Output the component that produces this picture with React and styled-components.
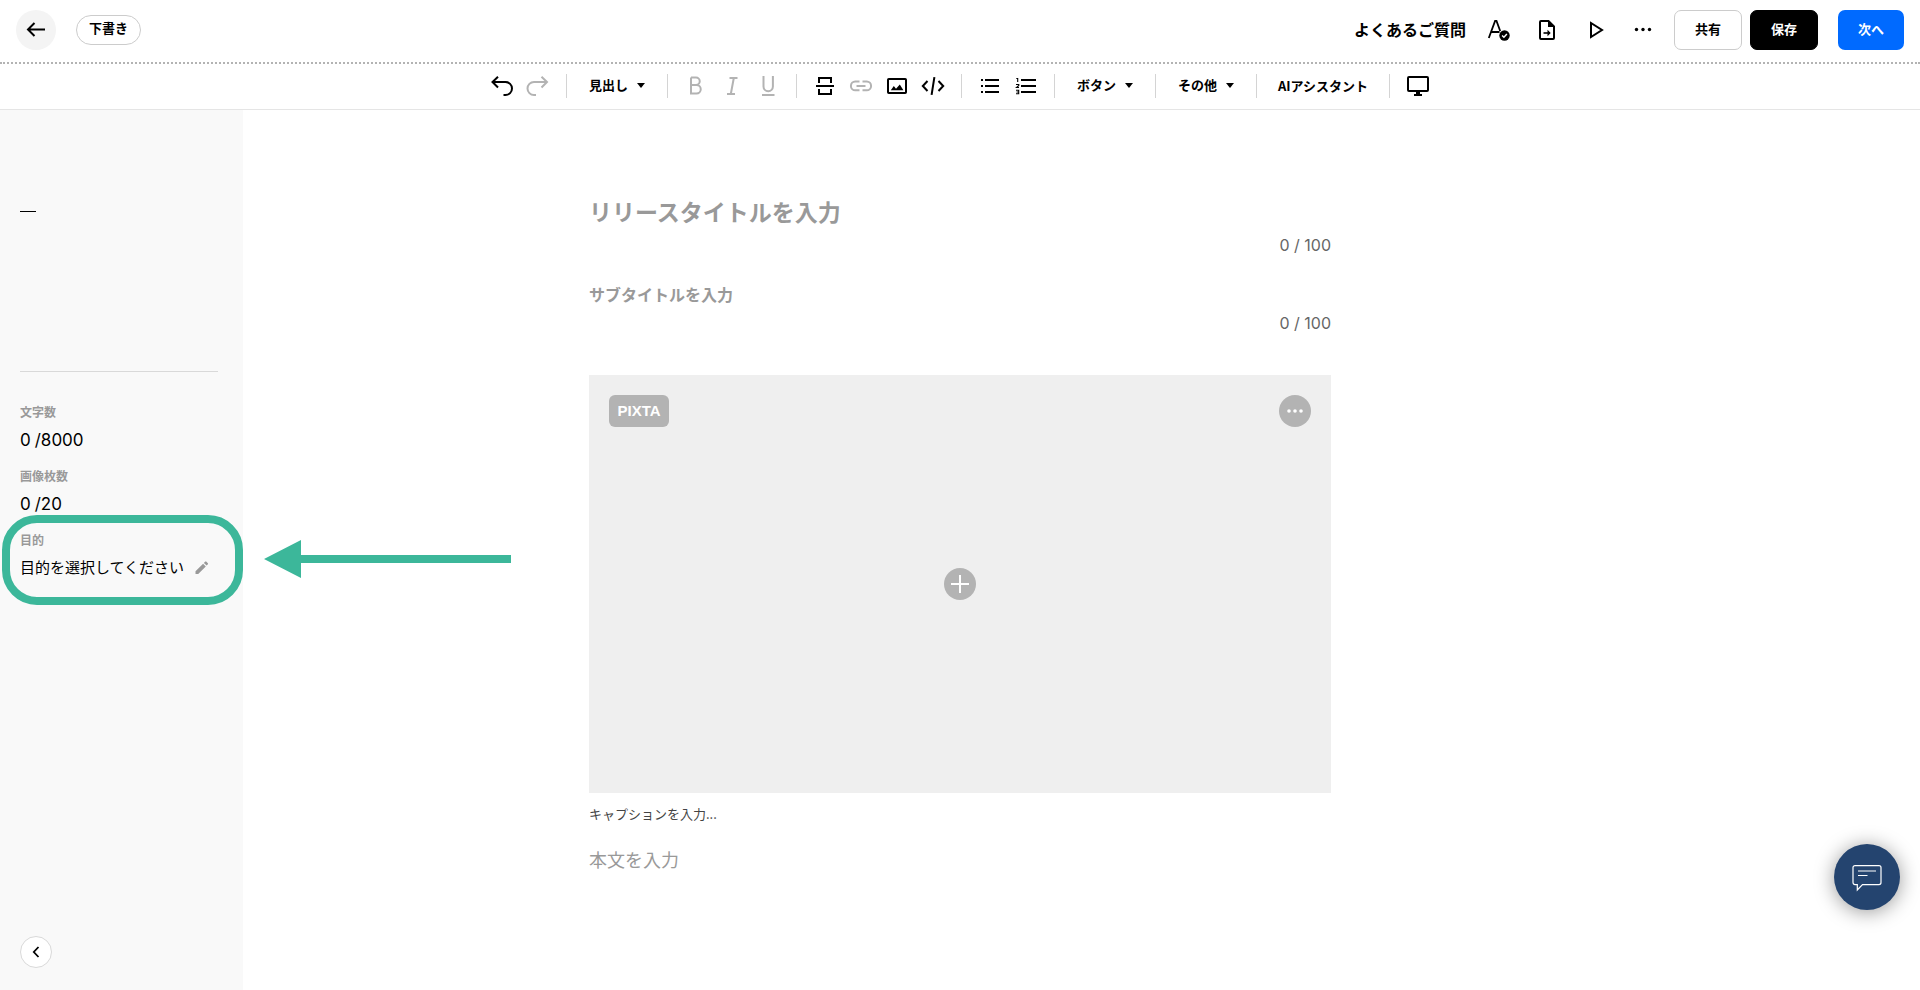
import React from "react";
import styled, { createGlobalStyle, css } from "styled-components";

const GlobalStyle = createGlobalStyle`
  *, *::before, *::after { box-sizing: border-box; }
  body {
    margin: 0;
    background: #fff;
    color: #000;
    font-family: "Noto Sans CJK JP", sans-serif;
    font-size: 16px;
  }
  button, input, textarea { font: inherit; color: inherit; }
  button { padding: 0; border: 0; background: none; cursor: pointer; }
  svg { display: block; }
`;

const Page = styled.div`
  display: flex;
  flex-direction: column;
  min-height: 100vh;
`;

/* ---------- header ---------- */

const Header = styled.header`
  display: flex;
  align-items: center;
  justify-content: space-between;
  padding: 10px 16px 12px;
  border-bottom: 2px dotted #b3b3b3;
`;

const HeaderGroup = styled.div`
  display: flex;
  align-items: center;
  gap: 20px;
`;

const BackButton = styled.button`
  display: grid;
  place-items: center;
  width: 40px;
  height: 40px;
  border-radius: 50%;
  background: #f4f4f4;
`;

const StatusPill = styled.span`
  padding: 0 12px 4px;
  border: 1px solid #ccc;
  border-radius: 15px;
  font-size: 13px;
  font-weight: 700;
  line-height: 24px;
`;

const FaqLink = styled.a`
  padding-bottom: 2px;
  color: #000;
  font-weight: 700;
  line-height: 24px;
  text-decoration: none;
`;

const IconRow = styled.div`
  display: flex;
  gap: 24px;
`;

const IconButton = styled.button`
  width: 24px;
  height: 24px;
  color: #000;
  &:disabled { color: #b3b3b3; cursor: default; }
`;

const ButtonRow = styled.div`
  display: flex;
  gap: 8px;
`;

const actionTones = {
  outline: css`
    border: 1px solid #ccc;
    background: #fff;
    color: #000;
  `,
  dark: css`
    border: 1px solid #000;
    background: #000;
    color: #fff;
  `,
  primary: css`
    background: #006aff;
    color: #fff;
  `,
};

const ActionButton = styled.button`
  height: 40px;
  padding: 0 20px 4px;
  border-radius: 7px;
  font-size: 13px;
  font-weight: 700;
  ${({ $tone }) => actionTones[$tone]}
`;

/* ---------- toolbar ---------- */

const Toolbar = styled.div`
  display: flex;
  justify-content: center;
  padding: 10px 0 11px;
  border-bottom: 1px solid #e5e5e5;
`;

const ToolGroup = styled.div`
  display: flex;
  align-items: center;
  gap: 12px;
  height: 24px;
  padding: 0 16px;
  & + & { border-left: 1px solid #d4d4d4; }
`;

const MenuButton = styled.button`
  display: flex;
  align-items: center;
  gap: 9px;
  height: 24px;
  padding: 0 6px 2px;
  font-size: 13px;
  font-weight: 700;
  line-height: 22px;
  white-space: nowrap;
`;

const AssistantButton = styled(MenuButton)`
  padding: 0 5px;
`;

const Caret = styled.span`
  border: 4px solid transparent;
  border-top: 5px solid #000;
  border-bottom: 0;
`;

/* ---------- workspace ---------- */

const Workspace = styled.div`
  flex: 1;
  display: grid;
  grid-template-columns: 243px minmax(0, 1fr) 243px;
`;

const Sidebar = styled.aside`
  display: flex;
  flex-direction: column;
  padding: 101px 25px 22px 20px;
  background: #f9f9f9;
`;

const OutlineMark = styled.span`
  width: 16px;
  height: 1px;
  background: #000;
`;

const Divider = styled.hr`
  width: 100%;
  height: 1px;
  margin: 159px 0 32px;
  border: 0;
  background: #d9d9d9;
`;

const Stats = styled.dl`
  display: flex;
  flex-direction: column;
  gap: 18px;
  margin: 0;
`;

const Stat = styled.div`
  position: relative;
  display: flex;
  flex-direction: column;
  gap: 10px;
  height: 46px;
`;

const StatLabel = styled.dt`
  color: #999;
  font-size: 12px;
  font-weight: 700;
  line-height: 16px;
`;

const StatValue = styled.dd`
  display: flex;
  align-items: center;
  gap: 4px;
  margin: 0;
  font-family: Inter, "Noto Sans CJK JP", sans-serif;
  font-size: 17px;
  line-height: 20px;
  white-space: nowrap;
`;

const PurposeButton = styled.button`
  display: flex;
  align-items: center;
  gap: 10px;
  padding-bottom: 2px;
  font-family: "Noto Sans CJK JP", sans-serif;
  font-size: 15px;
  line-height: 18px;
`;

const Highlight = styled.div`
  position: absolute;
  inset: -17px -25px -27px -18px;
  border: 8px solid #3cb79a;
  border-radius: 35px;
  pointer-events: none;
`;

const HighlightArrow = styled.svg`
  position: absolute;
  top: 8px;
  left: 244px;
  pointer-events: none;
`;

const CollapseButton = styled.button`
  display: grid;
  place-items: center;
  width: 32px;
  height: 32px;
  margin-top: auto;
  border: 1px solid #d9d9d9;
  border-radius: 50%;
  background: #fff;
`;

/* ---------- editor ---------- */

const Editor = styled.main`
  display: flex;
  flex-direction: column;
  width: 100%;
  max-width: 742px;
  margin: 0 auto;
  padding-top: 83px;
`;

const Field = styled.input`
  display: block;
  width: 100%;
  padding: 0;
  border: 0;
  outline: 0;
  background: none;
  &::placeholder { color: #999; opacity: 1; }
`;

const TitleField = styled(Field)`
  height: 36px;
  font-size: 23px;
  font-weight: 700;
`;

const SubtitleField = styled(Field)`
  height: 26px;
  margin-top: 26px;
  font-weight: 700;
`;

const Counter = styled.output`
  align-self: flex-end;
  margin-top: 6px;
  color: #666;
  font-family: Inter, sans-serif;
  font-size: 16px;
  line-height: 20px;
`;

const ImageSlot = styled.section`
  display: grid;
  grid-template-rows: 1fr auto 1fr;
  aspect-ratio: 742 / 418;
  margin-top: 42px;
  padding: 20px;
  background: #efefef;
`;

const SlotBar = styled.div`
  display: flex;
  justify-content: space-between;
  align-items: flex-start;
`;

const PixtaButton = styled.button`
  width: 60px;
  height: 32px;
  padding-bottom: 1px;
  border-radius: 6px;
  background: #b3b3b3;
  color: #fff;
  font-family: "Liberation Sans", sans-serif;
  font-size: 15px;
  font-weight: 700;
`;

const RoundButton = styled.button`
  display: grid;
  place-items: center;
  justify-self: center;
  width: 32px;
  height: 32px;
  border-radius: 50%;
  background: #b3b3b3;
  color: #fff;
`;

const CaptionField = styled(Field)`
  height: 20px;
  margin-top: 10px;
  font-size: 13px;
  &::placeholder { color: #444; }
`;

const BodyField = styled(Field)`
  height: 80px;
  margin-top: 22px;
  font-size: 18px;
  line-height: 28px;
  resize: none;
`;

const ChatButton = styled.button`
  position: fixed;
  right: 20px;
  bottom: 80px;
  display: grid;
  place-items: center;
  width: 66px;
  height: 66px;
  border-radius: 50%;
  background: #24446f;
  color: #fff;
  box-shadow: 0 2px 20px rgba(0, 0, 0, 0.4);
`;

/* ---------- icons ---------- */

const Icon = ({ size = 24, stroke = 2, children }) => (
  <svg
    width={size}
    height={size}
    viewBox={`0 0 ${size} ${size}`}
    fill="none"
    stroke="currentColor"
    strokeWidth={stroke}
    aria-hidden="true"
  >
    {children}
  </svg>
);

const solid = { fill: "currentColor", stroke: "none" };

const icons = {
  back: (
    <Icon>
      <path d="M21 11.500H4M10.500 5L4 11.500l6.500 6.500" />
    </Icon>
  ),
  proofread: (
    <Icon stroke={1.8}>
      <path d="M2.800 20L9.100 2.900h1.400L14.200 13M5 14h8.500" />
      <circle cx="18.500" cy="17.500" r="5.200" {...solid} />
      <path d="M16.100 17.600l1.800 1.700 3-3.300" stroke="#fff" strokeWidth="1.400" />
    </Icon>
  ),
  exportDoc: (
    <Icon>
      <path d="M14.500 3H7a1 1 0 0 0-1 1v16a1 1 0 0 0 1 1h12a1 1 0 0 0 1-1V8.500z" />
      <path d="M14 3v6h6z" {...solid} />
      <path d="M9.500 15h6" strokeWidth="1.600" />
      <path d="M13.500 11.800l3.200 3.200-3.200 3.200z" {...solid} />
    </Icon>
  ),
  play: (
    <Icon>
      <path d="M9 5v14L20 12z" />
    </Icon>
  ),
  more: (
    <Icon>
      <g {...solid}>
        <circle cx="6.500" cy="11.500" r="1.700" />
        <circle cx="13" cy="11.500" r="1.700" />
        <circle cx="19.500" cy="11.500" r="1.700" />
      </g>
    </Icon>
  ),
  undo: (
    <Icon>
      <path d="M8 2.800L2.500 8 8 13.500M2.500 8h13a6.500 6.500 0 0 1 0 13h-2" />
    </Icon>
  ),
  redo: (
    <Icon>
      <path d="M15.500 2.800L21 8l-5.500 5.500M21 8H8a6.500 6.500 0 0 0 0 13h2" />
    </Icon>
  ),
  bold: (
    <Icon>
      <path d="M7 3.500v16h5.500a4.200 4.200 0 0 0 0-8.500H7M7 3.500h5a3.700 3.700 0 0 1 0 7.500" />
    </Icon>
  ),
  italic: (
    <Icon>
      <path d="M9.500 4h8M7 20h8M13.800 4l-3 16" />
    </Icon>
  ),
  underline: (
    <Icon>
      <path d="M7.500 2v10.500a4.700 4.700 0 0 0 9.400 0V2M6 21h12.500" />
    </Icon>
  ),
  pageBreak: (
    <Icon>
      <path d="M3 12h18M6 9V4h12v5M6 15v5h12v-5" />
    </Icon>
  ),
  link: (
    <Icon>
      <path d="M10.500 7.500H6.300a4.400 4.400 0 0 0 0 8.800h4.200M13.500 7.500h4.200a4.400 4.400 0 0 1 0 8.800h-4.200M7.500 12h9" />
    </Icon>
  ),
  image: (
    <Icon>
      <rect x="3" y="5" width="18" height="14" rx="0.800" />
      <path d="M5.800 16.200l3-4.200 2.200 2.700 3.800-4.200 3.600 5.700z" {...solid} />
    </Icon>
  ),
  code: (
    <Icon>
      <path d="M6.500 7L1.800 12l4.700 5M17.500 7l4.700 5-4.700 5M13.400 3.200l-2.800 17.600" />
    </Icon>
  ),
  bulletList: (
    <Icon>
      <path d="M7 6h14M7 12h14M7 18h14M3 6h2M3 12h2M3 18h2" />
    </Icon>
  ),
  numberList: (
    <Icon>
      <path d="M7 6h15M7 12h15M7 18h15" />
      <path
        d="M2.300 4.500h1.400V8M2 10.500h2.800v1L2.500 13.500H5M2 16.300h2.700v3.500H2M2.500 18h2"
        strokeWidth="1.100"
      />
    </Icon>
  ),
  monitor: (
    <Icon>
      <rect x="2" y="3" width="20" height="14" rx="1" />
      <path d="M12 17v4M8 21h8" />
      <path d="M10 17h4v3h-4z" {...solid} />
    </Icon>
  ),
  pencil: (
    <Icon size={16}>
      <path
        d="M1.500 12.300V15h2.700l7.600-7.600-2.700-2.700zM13.900 5.300c.3-.3.3-.700 0-1l-1.700-1.700c-.3-.3-.700-.3-1 0L9.900 3.900l2.700 2.700z"
        fill="#999"
        stroke="none"
      />
    </Icon>
  ),
  collapse: (
    <Icon size={16} stroke={1.8}>
      <path d="M10.500 3L5.800 8l4.700 5" />
    </Icon>
  ),
  plus: (
    <Icon>
      <path d="M12 3v18M3 12h18" />
    </Icon>
  ),
  slotMore: (
    <Icon>
      <g {...solid}>
        <circle cx="6" cy="12" r="1.800" />
        <circle cx="12" cy="12" r="1.800" />
        <circle cx="18" cy="12" r="1.800" />
      </g>
    </Icon>
  ),
  chat: (
    <Icon size={30} stroke={1.2}>
      <path d="M3 3.600h24a2 2 0 0 1 2 2v15a2 2 0 0 1-2 2H10.500L5.300 28v-5.400H3a2 2 0 0 1-2-2v-15a2 2 0 0 1 2-2z" />
      <path d="M6 9h18M6 13.500h9.500" />
    </Icon>
  ),
};

const Tool = ({ name, label, disabled }) => (
  <IconButton type="button" aria-label={label} disabled={disabled}>
    {icons[name]}
  </IconButton>
);

const Menu = ({ children }) => (
  <MenuButton type="button" aria-haspopup="menu">
    {children}
    <Caret />
  </MenuButton>
);

export default function App() {
  return (
    <Page>
      <GlobalStyle />
      <Header>
        <HeaderGroup>
          <BackButton type="button" aria-label="戻る">{icons.back}</BackButton>
          <StatusPill>下書き</StatusPill>
        </HeaderGroup>
        <HeaderGroup>
          <FaqLink href="#faq">よくあるご質問</FaqLink>
          <IconRow>
            <Tool name="proofread" label="校正" />
            <Tool name="exportDoc" label="書き出し" />
            <Tool name="play" label="プレビュー" />
            <Tool name="more" label="メニュー" />
          </IconRow>
          <ButtonRow>
            <ActionButton type="button" $tone="outline">共有</ActionButton>
            <ActionButton type="button" $tone="dark">保存</ActionButton>
          </ButtonRow>
          <ActionButton type="button" $tone="primary">次へ</ActionButton>
        </HeaderGroup>
      </Header>

      <Toolbar role="toolbar" aria-label="編集ツール">
        <ToolGroup>
          <Tool name="undo" label="元に戻す" />
          <Tool name="redo" label="やり直す" disabled />
        </ToolGroup>
        <ToolGroup>
          <Menu>見出し</Menu>
        </ToolGroup>
        <ToolGroup>
          <Tool name="bold" label="太字" disabled />
          <Tool name="italic" label="斜体" disabled />
          <Tool name="underline" label="下線" disabled />
        </ToolGroup>
        <ToolGroup>
          <Tool name="pageBreak" label="区切り" />
          <Tool name="link" label="リンク" disabled />
          <Tool name="image" label="画像" />
          <Tool name="code" label="埋め込み" />
        </ToolGroup>
        <ToolGroup>
          <Tool name="bulletList" label="箇条書き" />
          <Tool name="numberList" label="番号付きリスト" />
        </ToolGroup>
        <ToolGroup>
          <Menu>ボタン</Menu>
        </ToolGroup>
        <ToolGroup>
          <Menu>その他</Menu>
        </ToolGroup>
        <ToolGroup>
          <AssistantButton type="button">AIアシスタント</AssistantButton>
        </ToolGroup>
        <ToolGroup>
          <Tool name="monitor" label="画面表示" />
        </ToolGroup>
      </Toolbar>

      <Workspace>
        <Sidebar>
          <OutlineMark />
          <Divider />
          <Stats>
            <Stat>
              <StatLabel>文字数</StatLabel>
              <StatValue><span>0</span><span>/8000</span></StatValue>
            </Stat>
            <Stat>
              <StatLabel>画像枚数</StatLabel>
              <StatValue><span>0</span><span>/20</span></StatValue>
            </Stat>
            <Stat>
              <StatLabel>目的</StatLabel>
              <StatValue>
                <PurposeButton type="button">
                  目的を選択してください
                  {icons.pencil}
                </PurposeButton>
                <Highlight />
                <HighlightArrow width="247" height="38" viewBox="0 0 247 38" aria-hidden="true">
                  <path d="M0 19L37 0v15h210v8H37v15z" fill="#3cb79a" />
                </HighlightArrow>
              </StatValue>
            </Stat>
          </Stats>
          <CollapseButton type="button" aria-label="サイドバーを閉じる">
            {icons.collapse}
          </CollapseButton>
        </Sidebar>

        <Editor>
          <TitleField aria-label="リリースタイトル" placeholder="リリースタイトルを入力" />
          <Counter>0 / 100</Counter>
          <SubtitleField aria-label="サブタイトル" placeholder="サブタイトルを入力" />
          <Counter>0 / 100</Counter>
          <ImageSlot aria-label="メイン画像">
            <SlotBar>
              <PixtaButton type="button">PIXTA</PixtaButton>
              <RoundButton type="button" aria-label="画像メニュー">{icons.slotMore}</RoundButton>
            </SlotBar>
            <RoundButton type="button" aria-label="画像を追加">{icons.plus}</RoundButton>
          </ImageSlot>
          <CaptionField aria-label="キャプション" placeholder="キャプションを入力..." />
          <BodyField as="textarea" aria-label="本文" placeholder="本文を入力" />
        </Editor>
      </Workspace>

      <ChatButton type="button" aria-label="チャット">{icons.chat}</ChatButton>
    </Page>
  );
}
